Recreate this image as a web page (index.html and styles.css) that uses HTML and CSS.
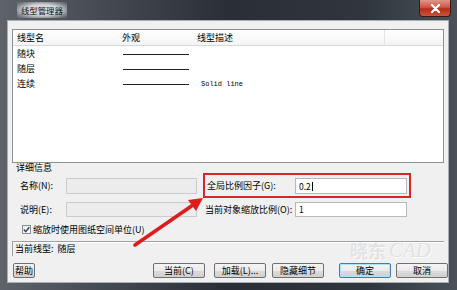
FILE: index.html
```html
<!DOCTYPE html>
<html lang="zh-CN">
<head>
    <meta charset="UTF-8">
    <title>线型管理器</title>
    <link rel="stylesheet" href="styles.css">
</head>
<body>
    <!--dialog window with aero frame-->
    <div class="window">
        <div class="titlebar">
            <span class="title">线型管理器</span>
            <span class="close">
                <svg width="11" height="9" viewBox="0 0 11 9"><path d="M2 1 L9 8 M9 1 L2 8" stroke="#fff" stroke-width="2.2" stroke-linecap="round"/></svg>
            </span>
        </div>

        <div class="client">
            <!--line type list-->
            <div class="list">
                <div class="list-head">
                    <span class="col-name">线型名</span>
                    <span class="col-look">外观</span>
                    <span class="col-desc">线型描述</span>
                    <span class="col-extra"></span>
                </div>
                <div class="list-row">
                    <span class="col-name">随块</span>
                    <span class="col-look"><i class="sample"></i></span>
                    <span class="col-desc"></span>
                </div>
                <div class="list-row">
                    <span class="col-name">随层</span>
                    <span class="col-look"><i class="sample"></i></span>
                    <span class="col-desc"></span>
                </div>
                <div class="list-row">
                    <span class="col-name">连续</span>
                    <span class="col-look"><i class="sample"></i></span>
                    <span class="col-desc mono">Solid line</span>
                </div>
            </div>

            <!--details section-->
            <div class="details-title">详细信息</div>
            <div class="field-row row-a">
                <span class="lbl">名称(N):</span>
                <span class="input off"></span>
                <div class="scale-box">
                    <span class="lbl-right">全局比例因子(G):</span>
                    <span class="input">0.2<i class="caret"></i></span>
                </div>
            </div>
            <div class="field-row row-b">
                <span class="lbl">说明(E):</span>
                <span class="input off"></span>
                <span class="lbl-right second">当前对象缩放比例(O):</span>
                <span class="input">1</span>
            </div>
            <div class="check-row">
                <span class="checkbox">
                    <svg width="9" height="9" viewBox="0 0 9 9"><path d="M1.8 4.6 L3.7 6.6 L7.3 2.2" fill="none" stroke="#2b4a7a" stroke-width="1.5"/></svg>
                </span>
                <span>缩放时使用图纸空间单位(U)</span>
            </div>

            <div class="status">当前线型:&nbsp; 随层</div>

            <!--bottom buttons-->
            <div class="buttons">
                <span class="btn btn-help">帮助</span>
                <span class="btn">当前(C)</span>
                <span class="btn">加载(L)...</span>
                <span class="btn">隐藏细节</span>
                <span class="btn btn-default">确定</span>
                <span class="btn">取消</span>
            </div>
        </div>

        <!--overlays: annotation arrow and watermark-->
        <svg class="arrow" width="457" height="290" viewBox="0 0 457 290">
            <line x1="135" y1="245" x2="193" y2="205" stroke="#e01b1b" stroke-width="3.6" stroke-linecap="round"/>
            <polygon points="203,198 196,211 188,200" fill="#e01b1b"/>
        </svg>
        <div class="watermark"><span class="wm-cn">晓东</span><span class="wm-en">CAD</span></div>
    </div>
</body>
</html>
```

FILE: styles.css
```css
* {
    box-sizing: border-box;
}

body {
    margin: 0;
    width: 457px;
    height: 290px;
    overflow: hidden;
    font-family: "Noto Sans CJK SC", "Liberation Sans", sans-serif;
    font-size: 9px;
    color: #000;
}

/* window frame */
.window {
    position: relative;
    width: 457px;
    height: 290px;
    display: flex;
    flex-direction: column;
    padding: 0 8px 7px 7px;
    background: linear-gradient(90deg, #5e6369 0%, #454b52 22%, #2a2f35 50%, #30363d 80%, #4a5158 100%);
}

.titlebar {
    height: 20px;
    margin: 0 -8px 0 -7px;
    padding-left: 17px;
    display: flex;
    align-items: flex-start;
}

.title {
    margin-top: 2px;
    height: 16px;
    line-height: 16px;
    padding: 0 4px;
    font-size: 8.4px;
    color: #111;
    background: radial-gradient(ellipse at center, rgba(220, 224, 228, 0.95) 45%, rgba(180, 186, 192, 0.4) 80%, rgba(120, 126, 132, 0) 100%);
}

.close {
    margin-left: auto;
    margin-right: 6px;
    width: 32px;
    height: 17px;
    display: flex;
    align-items: center;
    justify-content: center;
    border: 1px solid #3a1a16;
    border-top: none;
    border-radius: 0 0 4px 4px;
    background: linear-gradient(#e0978b, #cf5646 45%, #b62b1c 55%, #c9543a);
}

/* client area */
.client {
    flex: 1;
    background: #f0f0f0;
    border: 1px solid #a9aeb3;
    display: flex;
    flex-direction: column;
}

.list {
    margin: 8px 4px 0 4px;
    height: 134px;
    background: #fff;
    border: 1px solid #8c9096;
}

.list-head {
    height: 16px;
    display: flex;
    align-items: center;
    border-bottom: 1px solid #d8d8d8;
    background: linear-gradient(#ffffff, #f3f4f5);
}

.list-row {
    height: 15px;
    display: flex;
    align-items: center;
}

.col-name {
    width: 105px;
    padding-left: 4px;
}

.col-look {
    width: 75px;
    padding-left: 4px;
    display: flex;
}

.col-desc {
    width: 192px;
    padding-left: 4px;
}

.list-head .col-desc {
    border-right: 1px solid #e3e3e3;
    height: 16px;
    line-height: 16px;
}

.sample {
    display: block;
    width: 66px;
    height: 1px;
    margin-left: 1px;
    margin-top: 2px;
    background: #222;
}

.mono {
    padding-left: 8px;
    font-family: "Liberation Mono", monospace;
    font-size: 7px;
}

/* details */
.details-title {
    height: 10px;
    line-height: 10px;
    padding-left: 8px;
}

.field-row {
    display: flex;
    align-items: center;
    padding-left: 12px;
}

.row-a {
    height: 25px;
}

.row-b {
    height: 15px;
    margin-top: 4px;
}

.lbl {
    width: 46px;
}

.input {
    width: 131px;
    height: 16px;
    line-height: 14px;
    padding-left: 3px;
    background: #fff;
    border: 1px solid #b5b9bf;
    font-size: 8.5px;
}

.row-b .input {
    height: 15px;
    line-height: 13px;
}

.input.off {
    background: #ececec;
    border-color: #c9cbce;
}

.caret {
    display: inline-block;
    width: 1px;
    height: 9px;
    margin-left: 1px;
    vertical-align: -1px;
    background: #000;
}

.scale-box {
    margin-left: 6px;
    width: 208px;
    height: 25px;
    display: flex;
    align-items: center;
    padding: 0 2px;
    border: 2px solid #d6262a;
}

.lbl-right {
    width: 88px;
    padding-left: 0;
}

.lbl-right.second {
    margin-left: 6px;
    width: 92px;
    padding-left: 2px;
}

.scale-box .input,
.row-b .lbl-right + .input {
    width: 112px;
}

.check-row {
    margin-top: 7px;
    height: 10px;
    padding-left: 14px;
    display: flex;
    align-items: center;
    gap: 2px;
}

.checkbox {
    width: 9px;
    height: 9px;
    border: 1px solid #8f8f8f;
    background: linear-gradient(#e8ecf2, #fbfbfb);
    display: flex;
}

.checkbox svg {
    margin: -1px;
}

.status {
    margin: 7px 4px 0 4px;
    height: 15px;
    line-height: 14px;
    padding-left: 2px;
    border-top: 1px solid #a0a0a0;
    border-left: 1px solid #a0a0a0;
    box-shadow: inset 0 1px #fff;
}

/* buttons */
.buttons {
    margin-top: 7px;
    display: flex;
    padding-left: 5px;
}

.btn {
    width: 52px;
    height: 15px;
    line-height: 13px;
    text-align: center;
    border: 1px solid #707070;
    border-radius: 2px;
    background: linear-gradient(#f4f4f4 0%, #ebebeb 50%, #dcdcdc 51%, #d0d0d0 100%);
    margin-left: 6px;
}

.btn-help {
    width: 22px;
    margin-left: 0;
    margin-right: 112px;
}

.btn:nth-child(3) {
    margin-left: 9px;
}

.btn-default {
    margin-left: 15px;
    border-color: #3c7fb1;
    box-shadow: inset 0 0 0 1px #a8e3fb;
}

.btn-default + .btn {
    margin-left: 5px;
}

/* overlays */
.arrow {
    position: absolute;
    left: 0;
    top: 0;
    pointer-events: none;
}

.watermark {
    position: absolute;
    left: 350px;
    top: 241px;
    height: 19px;
    display: flex;
    align-items: flex-end;
    gap: 3px;
    line-height: 19px;
    pointer-events: none;
}

.wm-cn {
    font-size: 18px;
    font-weight: bold;
    color: rgba(210, 212, 215, 0.55);
    text-shadow: 1px 1px 0 rgba(255, 255, 255, 0.7);
}

.wm-en {
    font-family: "Liberation Serif", serif;
    font-style: italic;
    font-size: 21px;
    color: rgba(205, 208, 212, 0.5);
    text-shadow: 1px 1px 0 rgba(255, 255, 255, 0.7);
}
```
